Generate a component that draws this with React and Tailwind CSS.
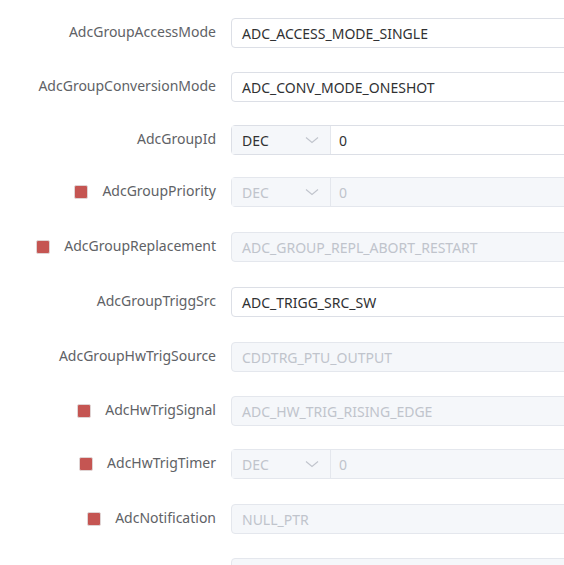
import React from "react";

const rows = [
  { label: "AdcGroupAccessMode", type: "input", value: "ADC_ACCESS_MODE_SINGLE", mt: "" },
  { label: "AdcGroupConversionMode", type: "input", value: "ADC_CONV_MODE_ONESHOT", mt: "mt-[24px]" },
  { label: "AdcGroupId", type: "num", value: "0", mt: "mt-[23px]" },
  { label: "AdcGroupPriority", type: "num", value: "0", disabled: true, mark: true, mt: "mt-[22px]" },
  { label: "AdcGroupReplacement", type: "input", value: "ADC_GROUP_REPL_ABORT_RESTART", disabled: true, mark: true, mt: "mt-[25px]" },
  { label: "AdcGroupTriggSrc", type: "input", value: "ADC_TRIGG_SRC_SW", mt: "mt-[25px]" },
  { label: "AdcGroupHwTrigSource", type: "input", value: "CDDTRG_PTU_OUTPUT", disabled: true, mt: "mt-[25px]" },
  { label: "AdcHwTrigSignal", type: "input", value: "ADC_HW_TRIG_RISING_EDGE", disabled: true, mark: true, mt: "mt-[24px]" },
  { label: "AdcHwTrigTimer", type: "num", value: "0", disabled: true, mark: true, mt: "mt-[23px]" },
  { label: "AdcNotification", type: "input", value: "NULL_PTR", disabled: true, mark: true, mt: "mt-[25px]" },
  { label: "", type: "input", value: "", disabled: true, mt: "mt-[24px]" },
];

function Chevron() {
  return (
    <svg width="14" height="8" viewBox="0 0 14 8" fill="none">
      <path d="M1 1.5 L7 6.5 L13 1.5" stroke="#c0c4cc" strokeWidth="1.1" />
    </svg>
  );
}

function Field({ row }) {
  const d = row.disabled;
  const box = d
    ? "bg-[#f5f7fa] border-[#e4e7ed] text-[#c0c4cc]"
    : "bg-white border-[#dcdfe6] text-[#303133]";
  if (row.type === "num") {
    return (
      <div className={`flex h-[30px] w-[420px] shrink-0 rounded-[4px] border ${box}`}>
        <div className="flex w-[99px] shrink-0 items-center justify-between border-r border-[#e4e7ed] bg-[#f5f7fa] pl-[10px] pr-[11px]">
          <span className={d ? "text-[#c0c4cc]" : "text-[#303133]"}>DEC</span>
          <Chevron />
        </div>
        <div className="flex items-center pl-[8px]">{row.value}</div>
      </div>
    );
  }
  return (
    <div className={`flex h-[30px] w-[420px] shrink-0 items-center rounded-[4px] border pl-[10px] ${box}`}>
      {row.value}
    </div>
  );
}

export default function App() {
  return (
    <div
      className="h-[565px] w-[564px] overflow-hidden bg-white pt-[18px] text-[14px]"
      style={{ fontFamily: '"Segoe UI", "Noto Sans", "Open Sans", sans-serif' }}
    >
      <div className="flex flex-col">
        {rows.map((r, i) => (
          <div key={i} className={`flex items-center ${r.mt}`}>
            <div className="flex w-[231px] shrink-0 items-center justify-end pr-[15px] text-[#606266]">
              {r.mark && (
                <span className="mr-[14px] inline-block h-[14px] w-[14px] rounded-[2px] border border-[#e0d4d4] bg-[#c55552]" />
              )}
              <span className="-mt-[3px] whitespace-nowrap">{r.label}</span>
            </div>
            <Field row={r} />
          </div>
        ))}
      </div>
    </div>
  );
}
